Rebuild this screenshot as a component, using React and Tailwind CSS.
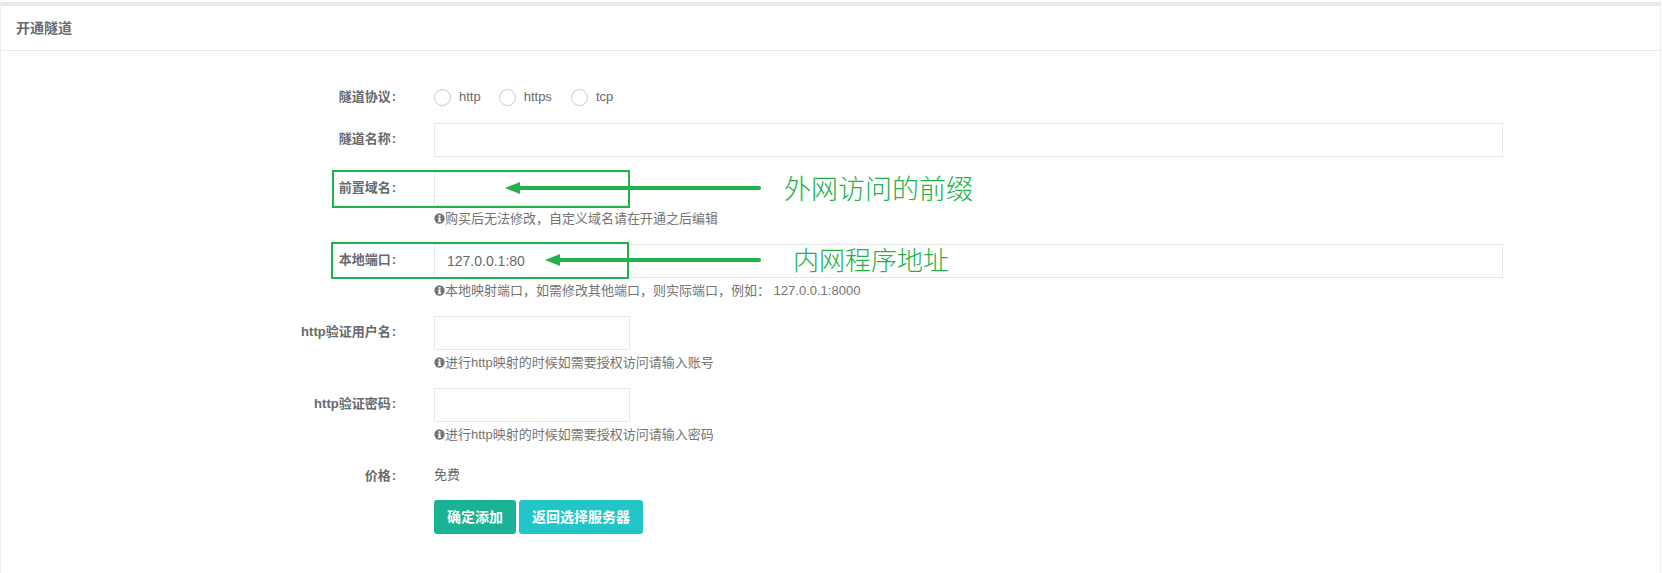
import React from 'react'

const FONT = "font-['Liberation_Sans','Noto_Sans_CJK_SC',sans-serif]"

const InfoIcon = () => (
    <svg viewBox="0 0 12 12" className="w-[11px] h-[11px] shrink-0">
        <circle cx="6" cy="6" r="5.6" fill="#737373" />
        <rect x="5" y="2.2" width="2.1" height="1.9" fill="#fff" />
        <path d="M4.2 5h2.9v3.6h.8v1.1H4.2V8.6h.8V6.1h-.8z" fill="#fff" />
    </svg>
)

const Help = ({ children }) => (
    <p className="flex items-center h-[23px] pt-[2px] text-[13px] text-[#737373]">
        <InfoIcon />
        <span>{children}</span>
    </p>
)

const Row = ({ label, children, className = "mb-[15px]" }) => (
    <div className={`flex ${className}`}>
        <label className="w-[396px] shrink-0 pt-[7px] pr-px text-right text-[13px] leading-[18px] font-bold text-[#676a6c]">
            {label}{label && <span className="ml-px">:</span>}
        </label>
        <div className="ml-[37px] flex-1 min-w-0">{children}</div>
    </div>
)

const Radio = ({ label, className = "mr-[18px]" }) => (
    <span className={`flex items-center ${className}`}>
        <span className="w-[17px] h-[17px] rounded-full border border-[#c9c9c9] bg-white mr-[8px]"></span>
        <span>{label}</span>
    </span>
)

const inputClass = "block h-[34px] border border-[#e5e6e7] bg-white px-[12px] text-[14px] text-[#676a6c] outline-none"

const Arrow = ({ className, width }) => (
    <svg className={className} width={width} height="16" viewBox={`0 0 ${width} 16`}>
        <line x1="12" y1="8" x2={width - 2} y2="8" stroke="#22b14c" strokeWidth="4" strokeLinecap="round" />
        <polygon points="0,8 15,2 15,14" fill="#22b14c" />
    </svg>
)

export default function App() {
    return (
        <div className={`relative h-[573px] bg-white pt-[2px] overflow-hidden ${FONT}`}>
            <div className="h-[571px] mr-px border-t-4 border-[#e7eaec] border-l border-r border-l-[#eeeeee] border-r-[#eeeeee] bg-white">
                <div className="h-[45px] flex items-center px-[15px] border-b border-[#e7eaec]">
                    <h5 className="text-[14px] font-bold text-[#676a6c]">开通隧道</h5>
                </div>

                <form className="pt-[30px] pr-[157px]">
                    <Row label="隧道协议">
                        <div className="flex items-center h-[32px] text-[13px] text-[#676a6c]">
                            <Radio label="http" />
                            <Radio label="https" className="mr-[19px]" />
                            <Radio label="tcp" />
                        </div>
                    </Row>
                    <Row label="隧道名称" className="-mt-[5px] mb-[15px]">
                        <input className={`${inputClass} w-full`} />
                    </Row>
                    <Row label="前置域名">
                        <input className={`${inputClass} w-[196px]`} />
                        <Help>{"购买后无法修改\uFF0C自定义域名请在开通之后编辑"}</Help>
                    </Row>
                    <Row label="本地端口">
                        <input className={`${inputClass} w-full`} defaultValue="127.0.0.1:80" />
                        <Help>{"本地映射端口\uFF0C如需修改其他端口\uFF0C则实际端口\uFF0C例如\uFF1A 127.0.0.1:8000"}</Help>
                    </Row>
                    <Row label="http验证用户名">
                        <input className={`${inputClass} w-[196px]`} />
                        <Help>进行http映射的时候如需要授权访问请输入账号</Help>
                    </Row>
                    <Row label="http验证密码">
                        <input className={`${inputClass} w-[196px]`} />
                        <Help>进行http映射的时候如需要授权访问请输入密码</Help>
                    </Row>
                    <Row label="价格">
                        <div className="pt-[6px] pb-px text-[13px] leading-[18px] text-[#676a6c]">免费</div>
                    </Row>
                    <Row label="">
                        <div className="flex gap-[3px]">
                            <button type="button" className="h-[34px] w-[82px] rounded-[3px] bg-[#1ab394] text-[14px] font-bold text-white">确定添加</button>
                            <button type="button" className="h-[34px] w-[124px] rounded-[3px] bg-[#23c6c8] text-[14px] font-bold text-white">返回选择服务器</button>
                        </div>
                    </Row>
                </form>
            </div>

            {/* annotations drawn over the form */}
            <div className="absolute left-[332px] top-[170px] w-[298px] h-[38px] border-2 border-[#22b14c]"></div>
            <div className="absolute left-[331px] top-[242px] w-[298px] h-[37px] border-2 border-[#22b14c]"></div>
            <Arrow className="absolute left-[505px] top-[180px]" width={256} />
            <Arrow className="absolute left-[545px] top-[252px]" width={216} />
            <span className="absolute left-[784px] top-[171px] text-[27px] leading-[38px] font-light text-[#22b14c]">外网访问的前缀</span>
            <span className="absolute left-[793px] top-[242px] text-[26px] leading-[38px] font-light text-[#22b14c]">内网程序地址</span>
        </div>
    )
}
